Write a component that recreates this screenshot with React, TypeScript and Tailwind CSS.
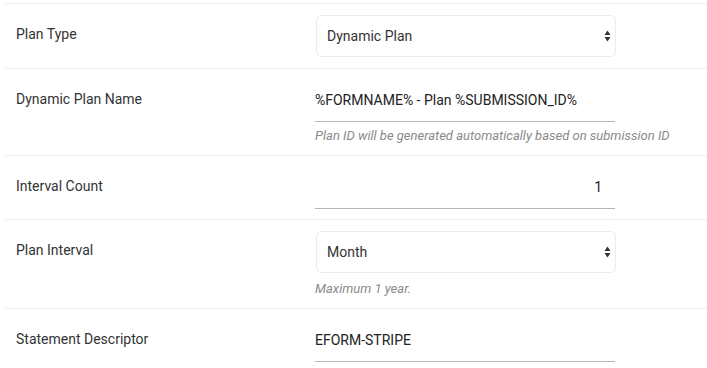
const FONT = "font-['Roboto','Liberation_Sans',sans-serif]";

function SortArrows() {
  return (
    <svg width="7" height="12" viewBox="0 0 7 12" aria-hidden="true" className="shrink-0">
      <path d="M3.5 0.5 L6.5 5 L0.5 5 Z" fill="#333" />
      <path d="M3.5 11.5 L6.5 7 L0.5 7 Z" fill="#333" />
    </svg>
  );
}

function Select({ value }: { value: string }) {
  return (
    <div className="flex h-[42px] w-[300px] items-center justify-between rounded-[5px] border border-[#ececec] bg-white pl-[10px] pr-[4px] text-[14px] text-[#333]">
      <span>{value}</span>
      <SortArrows />
    </div>
  );
}

function TextInput({ value, align = "left" }: { value: string; align?: "left" | "right" }) {
  return (
    <div
      className={`flex h-[42px] w-[300px] items-center border-b border-[#b5b5b5] text-[14px] text-[#222] ${
        align === "right" ? "justify-end pr-[13px]" : ""
      }`}
    >
      {value}
    </div>
  );
}

function Help({ children, mt }: { children: string; mt: string }) {
  return <p className={`${mt} text-[13px] italic leading-[18px] text-[#8a8a8a]`}>{children}</p>;
}

function Row({
  label,
  children,
  pb = "pb-[11px]",
}: {
  label: string;
  children: React.ReactNode;
  pb?: string;
}) {
  return (
    <div className={`flex border-b border-[#ededed] pt-[11px] ${pb}`}>
      <div className="w-[310px] shrink-0 pl-[11px] pt-[9px] text-[14px] leading-[20px] text-[#333]">
        {label}
      </div>
      <div className="min-w-0 flex-1">{children}</div>
    </div>
  );
}

export default function App() {
  return (
    <div className={`h-[368px] w-[707px] overflow-hidden bg-white pl-[5px] pt-[3px] ${FONT}`}>
      <div className="border-t border-[#ededed]">
        <Row label="Plan Type">
          <div className="pl-[1px]">
            <Select value="Dynamic Plan" />
          </div>
        </Row>
        <Row label="Dynamic Plan Name" pb="pb-[10px]">
          <TextInput value="%FORMNAME% - Plan %SUBMISSION_ID%" />
          <Help mt="mt-[5px]">Plan ID will be generated automatically based on submission ID</Help>
        </Row>
        <Row label="Interval Count" pb="pb-[10px]">
          <TextInput value="1" align="right" />
        </Row>
        <Row label="Plan Interval" pb="pb-[10px]">
          <div className="pl-[1px]">
            <Select value="Month" />
          </div>
          <Help mt="mt-[7px]">Maximum 1 year.</Help>
        </Row>
        <Row label="Statement Descriptor">
          <TextInput value="EFORM-STRIPE" />
        </Row>
      </div>
    </div>
  );
}
